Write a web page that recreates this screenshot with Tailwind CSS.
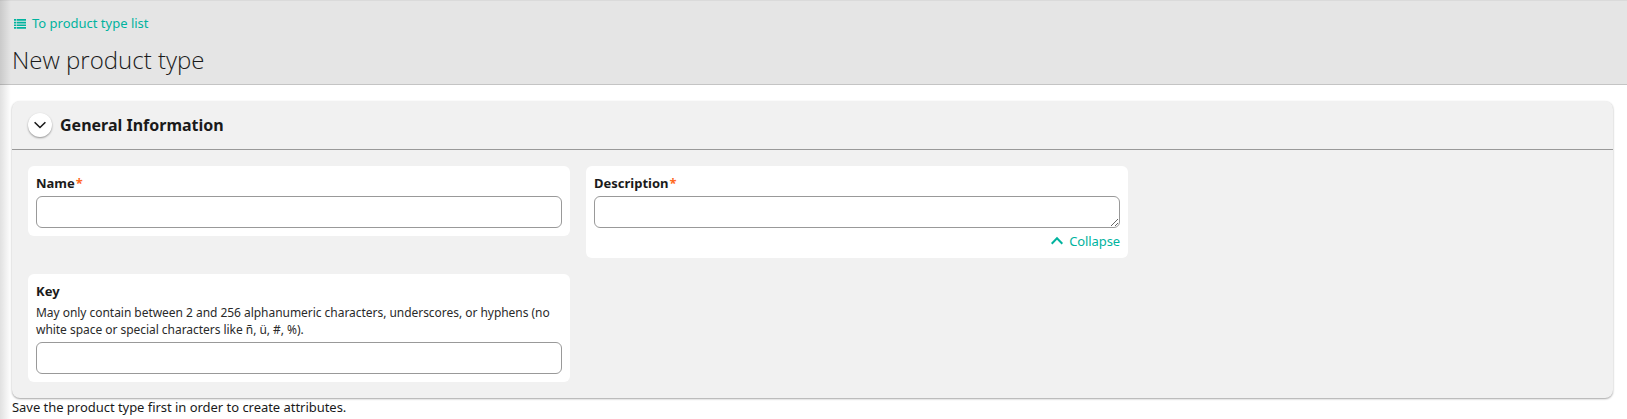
<!DOCTYPE html>
<html lang="en">
<head>
<meta charset="utf-8">
<title>New product type</title>
<script src="https://cdn.jsdelivr.net/npm/@tailwindcss/browser@4"></script>
</head>
<body class="relative h-[419px] overflow-hidden bg-white font-['Noto_Sans',sans-serif] text-[13px] leading-[18px] text-[#1a1a1a]">
<header class="h-[85px] border-t border-b border-t-[#dadada] border-b-[#c4c4c4] bg-[#e5e5e5] pl-3">
  <a class="flex h-[18px] mt-[13px] items-center gap-[6px] pl-[2px] text-[#00b39e]">
    <svg class="mt-px h-[10px] w-3" viewBox="0 0 12 10" fill="currentColor"><path d="M0 0h2v1.700H0zM2.600 0H12v1.700H2.600zM0 2.700h2v1.700H0zM2.600 2.700H12v1.700H2.600zM0 5.400h2v1.700H0zM2.600 5.400H12v1.700H2.600zM0 8.100h2v1.700H0zM2.600 8.100H12v1.700H2.600z"/></svg>
    <span>To product type list</span>
  </a>
  <h1 class="mt-[11px] font-['Open_Sans',sans-serif] text-2xl leading-[34px] font-light">New product type</h1>
</header>
<main class="pt-4 pr-[14px] pl-3">
  <section class="h-[297px] rounded-lg bg-[#f1f1f1] shadow-[0_1px_2px_rgba(0,0,0,0.36)]">
    <div class="flex h-[49px] items-center gap-2 border-b border-[#999] pl-4">
      <button class="flex size-6 items-center justify-center rounded-full bg-white shadow-[0_1px_2px_rgba(0,0,0,0.4)]">
        <svg class="h-3 w-3" viewBox="0 0 12 12" fill="none" stroke="currentColor" stroke-width="1.6"><path d="M.6 3.200 6 8.500l5.400-5.300"/></svg>
      </button>
      <h2 class="text-base leading-6 font-bold">General Information</h2>
    </div>
    <div class="grid grid-cols-[542px_542px] items-start gap-4 p-4">
      <div class="h-[70px] rounded-md bg-white px-2 pt-2">
        <label class="block h-[22px] font-bold leading-[19px]">Name<span class="pl-px text-[#ff6a1f]">*</span></label>
        <input class="block h-8 w-full rounded-md border border-[#999] bg-white">
      </div>
      <div class="h-[92px] rounded-md bg-white px-2 pt-2">
        <label class="block h-[22px] font-bold leading-[19px]">Description<span class="pl-px text-[#ff6a1f]">*</span></label>
        <textarea class="block h-8 w-full resize rounded-md border border-[#999] bg-white"></textarea>
        <div class="mt-[4px] flex items-center justify-end gap-[6px] text-[#00b39e]">
          <svg class="h-3 w-3" viewBox="0 0 12 12" fill="none" stroke="currentColor" stroke-width="2"><path d="M.7 8.700 6 3.300l5.300 5.400"/></svg>
          <span class="tracking-[-0.1px]">Collapse</span>
        </div>
      </div>
      <div class="h-[108px] rounded-md bg-white px-2 pt-2">
        <label class="block h-[22px] font-bold leading-[19px]">Key</label>
        <p class="h-[38px] text-xs leading-[17px] tracking-[-0.038px] text-[#2a2a2a]">May only contain between 2 and 256 alphanumeric characters, underscores, or hyphens (no<br>white space or special characters like ñ, ü, #, %).</p>
        <input class="block h-8 w-full rounded-md border border-[#999] bg-white">
      </div>
    </div>
  </section>
  <p class="tracking-[-0.035px]">Save the product type first in order to create attributes.</p>
</main>
<div class="pointer-events-none absolute inset-y-0 left-0 w-[11px] bg-linear-to-r from-black/12 to-transparent"></div>
</body>
</html>
